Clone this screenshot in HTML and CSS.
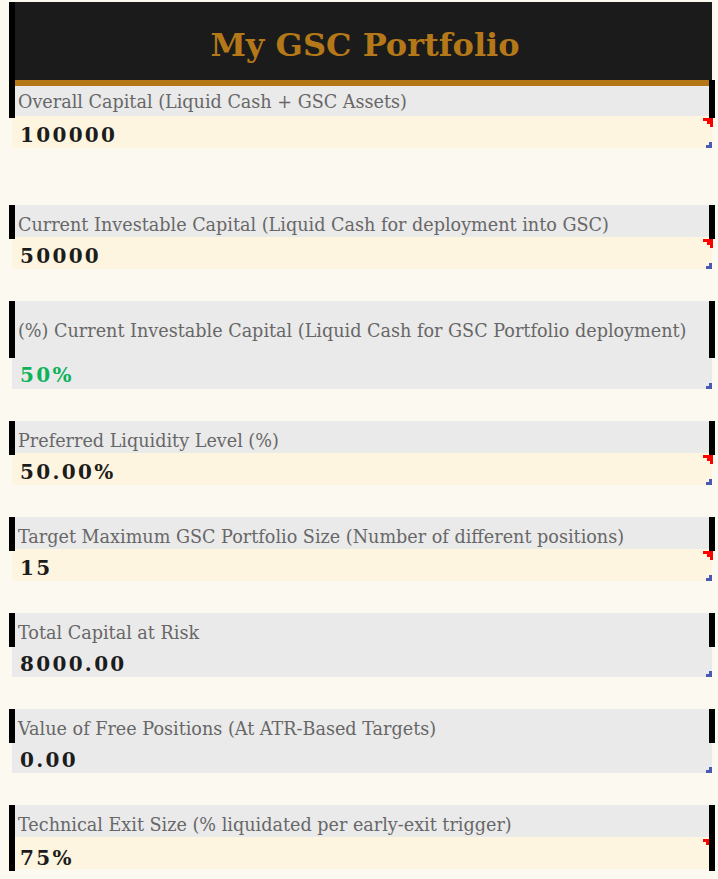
FILE: index.html
```html
<!DOCTYPE html>
<html lang="en">
<head>
<meta charset="utf-8">
<title>My GSC Portfolio</title>
<link rel="stylesheet" href="styles.css">
</head>
<body>
<div class="sheet">
  <header class="title-bar"><h1 class="title">My GSC Portfolio</h1></header>

  <section class="field field-first">
    <div class="label label-first"><div class="gold"></div><div class="label-text">Overall Capital (Liquid Cash + GSC Assets)</div></div>
    <div class="value has-note has-mark">100000</div>
  </section>

  <section class="field">
    <div class="label"><div class="label-text">Current Investable Capital (Liquid Cash for deployment into GSC)</div></div>
    <div class="value has-note has-mark">50000</div>
  </section>

  <section class="field">
    <div class="label label-tall"><div class="label-text">(%) Current Investable Capital (Liquid Cash for GSC Portfolio deployment)</div></div>
    <div class="value value-grey value-green value-tall has-mark">50%</div>
  </section>

  <section class="field">
    <div class="label"><div class="label-text">Preferred Liquidity Level (%)</div></div>
    <div class="value has-note has-mark">50.00%</div>
  </section>

  <section class="field">
    <div class="label"><div class="label-text">Target Maximum GSC Portfolio Size (Number of different positions)</div></div>
    <div class="value has-note has-mark">15</div>
  </section>

  <section class="field">
    <div class="label"><div class="label-text">Total Capital at Risk</div></div>
    <div class="value value-grey has-mark">8000.00</div>
  </section>

  <section class="field">
    <div class="label"><div class="label-text">Value of Free Positions (At ATR-Based Targets)</div></div>
    <div class="value value-grey has-mark">0.00</div>
  </section>

  <section class="field">
    <div class="label"><div class="label-text">Technical Exit Size (% liquidated per early-exit trigger)</div></div>
    <div class="value value-boxed has-note">75%</div>
  </section>
</div>
</body>
</html>
```
FILE: styles.css
```css
html, body {
  margin: 0;
  padding: 0;
  background: #fcf9f1;
}

.sheet {
  padding: 2px 0 0 9px;
  font-family: "DejaVu Serif", "Liberation Serif", serif;
}

.title-bar {
  box-sizing: border-box;
  width: 703px;
  height: 78px;
  border-left: 6px solid #000;
  background: #1b1b1b;
  display: flex;
  align-items: center;
  justify-content: center;
}

.title {
  margin: 7px 0 0 3px;
  font-size: 32px;
  font-weight: bold;
  color: #b47819;
  line-height: 38px;
}

.field {
  margin-bottom: 32px;
}

.field-first {
  margin-bottom: 57px;
}

.label {
  box-sizing: border-box;
  position: relative;
  z-index: 1;
  width: 706px;
  height: 34px;
  margin-bottom: -2px;
  border-left: 6px solid #000;
  border-right: 6px solid #000;
  background: linear-gradient(#eaeaea, #eaeaea) top / 100% 32px no-repeat;
}

.label-first {
  height: 38px;
  background-size: 100% 36px;
}

.label-tall {
  height: 57px;
  background-size: 100% 55px;
}

.gold {
  height: 6px;
  background: #b47819;
}

.label-text {
  padding: 9.5px 0 0 3px;
  font-size: 17.6px;
  line-height: 20px;
  color: #676767;
  white-space: nowrap;
}

.label-first .label-text {
  padding-top: 5.5px;
}

.label-tall .label-text {
  padding-top: 20px;
}

.value {
  box-sizing: border-box;
  position: relative;
  width: 700px;
  height: 32px;
  margin-left: 3px;
  padding: 7px 0 0 8px;
  background: #fdf5df;
  font-size: 20px;
  font-weight: bold;
  line-height: 24px;
  letter-spacing: 2.3px;
  color: #1c1c1c;
  white-space: nowrap;
}

.value-grey {
  background: #eaeaea;
}

.value-tall {
  height: 33px;
}

.value-green {
  color: #0db25a;
}

.value-boxed {
  width: 706px;
  height: 34px;
  margin-left: 0;
  padding: 8.5px 0 0 5px;
  border-left: 6px solid #000;
  border-right: 6px solid #000;
  background: linear-gradient(#fdf5df, #fdf5df) top / 100% 32px no-repeat;
}

.has-note::before {
  content: "";
  position: absolute;
  top: 2px;
  right: -1px;
  width: 10px;
  height: 9px;
  background: #ff0000;
  clip-path: polygon(0 0, 100% 0, 100% 100%, 70% 100%, 70% 66%, 40% 66%, 40% 33%, 0 33%);
}

.value-boxed.has-note::before {
  right: 0;
  width: 6px;
  height: 6px;
  clip-path: polygon(0 0, 100% 0, 100% 100%, 50% 100%, 50% 50%, 0 50%);
}

.has-mark::after {
  content: "";
  position: absolute;
  right: 0;
  bottom: 0;
  width: 6px;
  height: 6px;
  background: #4a5ab4;
  clip-path: polygon(50% 0, 100% 0, 100% 100%, 0 100%, 0 50%, 50% 50%);
}
```
